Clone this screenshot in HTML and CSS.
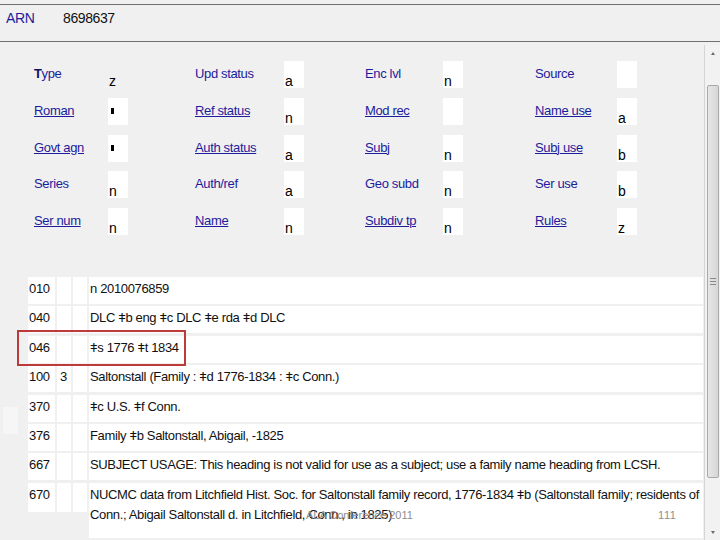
FILE: index.html
```html
<!DOCTYPE html>
<html lang="en">
<head>
<meta charset="utf-8">
<title>ARN 8698637</title>
<link rel="stylesheet" href="styles.css">
</head>
<body>
<div class="screen">
  <header class="arn-bar">
    <span class="arn-label">ARN</span>
    <span class="arn-num">8698637</span>
  </header>
  <div class="pane">
    <div class="content">
      <div class="fixed-grid">
        <span class="lbl"><b class="mn">T</b>ype</span><span class="val plain">z</span>
        <span class="lbl">Upd status</span><span class="val">a</span>
        <span class="lbl">Enc lvl</span><span class="val">n</span>
        <span class="lbl">Source</span><span class="val"></span>

        <span class="lbl link">Roman</span><span class="val"><i class="blank"></i></span>
        <span class="lbl link">Ref status</span><span class="val">n</span>
        <span class="lbl link">Mod rec</span><span class="val"></span>
        <span class="lbl link">Name use</span><span class="val">a</span>

        <span class="lbl link">Govt agn</span><span class="val"><i class="blank"></i></span>
        <span class="lbl link">Auth status</span><span class="val">a</span>
        <span class="lbl link">Subj</span><span class="val">n</span>
        <span class="lbl link">Subj use</span><span class="val">b</span>

        <span class="lbl">Series</span><span class="val">n</span>
        <span class="lbl">Auth/ref</span><span class="val">a</span>
        <span class="lbl">Geo subd</span><span class="val">n</span>
        <span class="lbl">Ser use</span><span class="val">b</span>

        <span class="lbl link">Ser num</span><span class="val">n</span>
        <span class="lbl link">Name</span><span class="val">n</span>
        <span class="lbl link">Subdiv tp</span><span class="val">n</span>
        <span class="lbl link">Rules</span><span class="val">z</span>
      </div>

      <div class="var-fields">
        <span class="cell tag">010</span><span class="cell ind"></span><span class="cell ind"></span><span class="cell data">n 2010076859</span>
        <span class="cell tag">040</span><span class="cell ind"></span><span class="cell ind"></span><span class="cell data">DLC ǂb eng ǂc DLC ǂe rda ǂd DLC</span>
        <span class="cell tag">046</span><span class="cell ind"></span><span class="cell ind"></span><span class="cell data">ǂs 1776 ǂt 1834</span>
        <span class="cell tag">100</span><span class="cell ind">3</span><span class="cell ind"></span><span class="cell data">Saltonstall (Family : ǂd 1776-1834 : ǂc Conn.)</span>
        <span class="cell tag">370</span><span class="cell ind"></span><span class="cell ind"></span><span class="cell data">ǂc U.S. ǂf Conn.</span>
        <span class="cell tag">376</span><span class="cell ind"></span><span class="cell ind"></span><span class="cell data">Family ǂb Saltonstall, Abigail, -1825</span>
        <span class="cell tag">667</span><span class="cell ind"></span><span class="cell ind"></span><span class="cell data">SUBJECT USAGE: This heading is not valid for use as a subject; use a family name heading from LCSH.</span>
        <span class="cell tag short">670</span><span class="cell ind short"></span><span class="cell ind short"></span><span class="cell data">NUCMC data from Litchfield Hist. Soc. for Saltonstall family record, 1776-1834 ǂb (Saltonstall family; residents of<br>Conn.; Abigail Saltonstall d. in Litchfield, Conn., in 1825)</span>
        <div class="highlight"></div>
      </div>
      <div class="ghost"></div>
    </div>
    <div class="scrollbar">
      <div class="sb-btn"><i class="arrow up"></i></div>
      <div class="sb-track">
        <div class="sb-thumb"><i class="grip"></i></div>
      </div>
      <div class="sb-btn"><i class="arrow down"></i></div>
    </div>
  </div>
  <div class="slide-footer">ALA Conference 2011</div>
  <div class="slide-num">111</div>
</div>
</body>
</html>
```

FILE: styles.css
```css
* { box-sizing: border-box; }

html, body {
  margin: 0;
  padding: 0;
  background: #f0f0f0;
}

body {
  font-family: "Liberation Sans", Arial, sans-serif;
  color: #111;
}

.screen {
  position: relative;
  width: 720px;
  height: 540px;
  overflow: hidden;
  background: #f0f0f0;
  padding-top: 4px;
  display: flex;
  flex-direction: column;
}

/* ARN bar */
.arn-bar {
  height: 38px;
  border-top: 1px solid #6f6f6f;
  border-bottom: 1px solid #6f6f6f;
  padding: 5px 0 0 6px;
  display: flex;
  font-size: 14px;
  line-height: 16px;
  letter-spacing: -0.4px;
  flex: none;
}

.arn-label {
  width: 57px;
  color: #1c1c9c;
}

.arn-num {
  color: #111;
}

/* pane */
.pane {
  flex: 1;
  display: flex;
  min-height: 0;
}

.content {
  position: relative;
  width: 704px;
  flex: none;
}

/* fixed fields */
.fixed-grid {
  margin-top: 19px;
  padding-left: 34px;
  display: grid;
  grid-template-columns: 74px 87px 89px 81px 78px 92px 82px 20px;
  grid-auto-rows: 27px;
  row-gap: 9.75px;
}

.lbl {
  color: #1c1c9c;
  font-size: 13px;
  line-height: 25px;
  letter-spacing: -0.35px;
  white-space: nowrap;
}

.lbl.link {
  text-decoration: underline;
  text-underline-offset: 1px;
}

.mn {
  color: #101060;
  font-weight: bold;
}

.val {
  width: 20px;
  height: 27px;
  background: #fff;
  display: flex;
  align-items: flex-end;
  padding-left: 1px;
  font-size: 14px;
  line-height: 14px;
  color: #000;
}

.val.plain {
  background: transparent;
}

.blank {
  display: block;
  width: 3px;
  height: 6px;
  background: #000;
  align-self: center;
  margin-left: 2px;
}

/* variable fields */
.var-fields {
  position: relative;
  margin-top: 42px;
  padding: 0 1px 0 28px;
  display: grid;
  grid-template-columns: 27px 14px 14px 1fr;
  grid-template-rows: repeat(7, 27px) 55px;
  column-gap: 2px;
  row-gap: 2.4px;
  font-size: 13px;
  letter-spacing: -0.35px;
  line-height: 20px;
}

.cell {
  background: #fff;
  padding-top: 2px;
  color: #111;
  white-space: nowrap;
}

.tag { padding-left: 1px; }
.ind { padding-left: 3px; }
.data { padding-left: 1px; }

.cell.short {
  height: 29px;
  align-self: start;
}

.highlight {
  position: absolute;
  left: 17px;
  top: 53px;
  width: 169px;
  height: 36px;
  border: 2px solid #bd3a3a;
}

.ghost {
  position: absolute;
  left: 3px;
  top: 365px;
  width: 15px;
  height: 27px;
  background: #f6f6f6;
}

/* scrollbar */
.scrollbar {
  width: 16px;
  margin-top: 3px;
  border-left: 1px solid #d4d4d4;
  background: #f2f2f2;
  display: flex;
  flex-direction: column;
}

.sb-btn {
  height: 16px;
  flex: none;
  display: flex;
  align-items: center;
  justify-content: center;
}

.arrow {
  width: 0;
  height: 0;
  border-left: 2px solid transparent;
  border-right: 2px solid transparent;
}

.arrow.up { border-bottom: 3px solid #6a6a6a; }
.arrow.down { border-top: 3px solid #6a6a6a; }

.sb-track {
  flex: 1;
}

.sb-thumb {
  margin: 24px 0 0 2px;
  width: 12px;
  height: 393px;
  border: 1px solid #a9a9a9;
  border-radius: 2px;
  background: linear-gradient(to right, #e6e6e6, #d6d6d6);
  display: flex;
  align-items: center;
  justify-content: center;
}

.grip {
  width: 6px;
  height: 7px;
  border-top: 1px solid #8a8a8a;
  border-bottom: 1px solid #8a8a8a;
  background: linear-gradient(#8a8a8a, #8a8a8a) center / 6px 1px no-repeat;
}

/* slide footer overlay */
.slide-footer,
.slide-num {
  position: absolute;
  top: 508px;
  font-family: "Liberation Sans", Arial, sans-serif;
  font-size: 11px;
  line-height: 14px;
  color: #8e8e8e;
}

.slide-footer { left: 306px; }
.slide-num { left: 658px; letter-spacing: 0.6px; }
```
